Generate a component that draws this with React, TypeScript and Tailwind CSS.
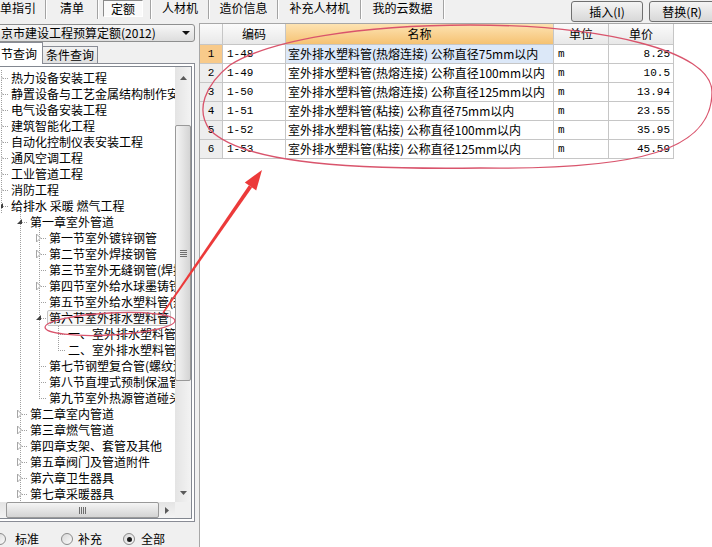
import React from "react";

const cjk = "font-['Noto_Sans_CJK_SC','Liberation_Sans',sans-serif]";
const mono = "font-['Liberation_Mono','Noto_Sans_CJK_SC',monospace]";

type TreeNode = { lv: number; ex?: "open" | "closed"; t: string; sel?: boolean };

const treeRows: TreeNode[] = [
  { lv: 0, ex: "closed", t: "热力设备安装工程" },
  { lv: 0, ex: "closed", t: "静置设备与工艺金属结构制作安装工程" },
  { lv: 0, ex: "closed", t: "电气设备安装工程" },
  { lv: 0, ex: "closed", t: "建筑智能化工程" },
  { lv: 0, ex: "closed", t: "自动化控制仪表安装工程" },
  { lv: 0, ex: "closed", t: "通风空调工程" },
  { lv: 0, ex: "closed", t: "工业管道工程" },
  { lv: 0, ex: "closed", t: "消防工程" },
  { lv: 0, ex: "open", t: "给排水 采暖 燃气工程" },
  { lv: 1, ex: "open", t: "第一章室外管道" },
  { lv: 2, ex: "closed", t: "第一节室外镀锌钢管" },
  { lv: 2, ex: "closed", t: "第二节室外焊接钢管" },
  { lv: 2, t: "第三节室外无缝钢管(焊接)" },
  { lv: 2, ex: "closed", t: "第四节室外给水球墨铸铁管" },
  { lv: 2, t: "第五节室外给水塑料管(热熔连接)" },
  { lv: 2, ex: "open", t: "第六节室外排水塑料管", sel: true },
  { lv: 3, t: "一、室外排水塑料管(热熔连接)" },
  { lv: 3, t: "二、室外排水塑料管(粘接)" },
  { lv: 2, t: "第七节钢塑复合管(螺纹连接)" },
  { lv: 2, t: "第八节直埋式预制保温管" },
  { lv: 2, t: "第九节室外热源管道碰头" },
  { lv: 1, ex: "closed", t: "第二章室内管道" },
  { lv: 1, ex: "closed", t: "第三章燃气管道" },
  { lv: 1, ex: "closed", t: "第四章支架、套管及其他" },
  { lv: 1, ex: "closed", t: "第五章阀门及管道附件" },
  { lv: 1, ex: "closed", t: "第六章卫生器具" },
  { lv: 1, ex: "closed", t: "第七章采暖器具" },
];

const pads = ["pl-[10px]", "pl-[29px]", "pl-[48px]", "pl-[67px]"];

const quotas = [
  { code: "1-48", name: "室外排水塑料管(热熔连接) 公称直径75mm以内", unit: "m", price: "8.25" },
  { code: "1-49", name: "室外排水塑料管(热熔连接) 公称直径100mm以内", unit: "m", price: "10.5" },
  { code: "1-50", name: "室外排水塑料管(热熔连接) 公称直径125mm以内", unit: "m", price: "13.94" },
  { code: "1-51", name: "室外排水塑料管(粘接) 公称直径75mm以内", unit: "m", price: "23.55" },
  { code: "1-52", name: "室外排水塑料管(粘接) 公称直径100mm以内", unit: "m", price: "35.95" },
  { code: "1-53", name: "室外排水塑料管(粘接) 公称直径125mm以内", unit: "m", price: "45.59" },
];

function Sep() {
  return <div className="h-[19px] w-[2px] border-l border-[#a3a3a3] bg-white" />;
}

function TopBar() {
  return (
    <div className="flex h-[23px] items-start">
      <div className="flex h-[16px] w-[45px] items-center">单指引</div>
      <Sep />
      <div className="flex h-[16px] w-[50px] items-center justify-center">清单</div>
      <Sep />
      <div className="h-[17px] w-[51px] pl-[4px]">
        <div className="flex h-[17px] w-[40px] items-center justify-center border border-[#8a8a8a] border-b-white border-r-white bg-[#fafafa]">
          定额
        </div>
      </div>
      <Sep />
      <div className="flex h-[16px] w-[56px] items-center justify-center">人材机</div>
      <Sep />
      <div className="flex h-[16px] w-[67px] items-center justify-center">造价信息</div>
      <Sep />
      <div className="flex h-[16px] w-[81px] items-center justify-center">补充人材机</div>
      <Sep />
      <div className="flex h-[16px] w-[81px] items-center justify-center">我的云数据</div>
      <Sep />
      <div className="ml-auto -mr-[3px] mt-[1px] flex gap-[6px]">
        <button className="h-[21px] w-[72px] rounded-[3px] border border-[#707070] bg-gradient-to-b from-[#f4f4f4] to-[#d8d8d8] text-[12px]">
          插入(I)
        </button>
        <button className="h-[21px] w-[66px] rounded-[3px] border border-[#707070] bg-gradient-to-b from-[#f4f4f4] to-[#d8d8d8] text-[12px]">
          替换(R)
        </button>
      </div>
    </div>
  );
}

function TreeLines() {
  const cx = (lv: number) => lv * 19;
  return (
    <svg className="pointer-events-none absolute left-0 top-[3px]" width="180" height="432">
      <g stroke="#a0a0a0" strokeWidth="1" strokeDasharray="1 1" shapeRendering="crispEdges">
        <line x1="0.5" y1="0" x2="0.5" y2="144" />
        <line x1="19.5" y1="136" x2="19.5" y2="432" />
        <line x1="38.5" y1="152" x2="38.5" y2="328" />
        <line x1="57.5" y1="248" x2="57.5" y2="280" />
        {treeRows.map((r, i) => (
          <line key={i} x1={cx(r.lv)} y1={i * 16 + 8.5} x2={cx(r.lv) + 8} y2={i * 16 + 8.5} />
        ))}
      </g>
      {treeRows.map((r, i) => {
        const x = cx(r.lv);
        const y = i * 16 + 8;
        if (r.ex === "closed")
          return (
            <polygon
              key={i}
              points={`${x - 2.5},${y - 4} ${x + 1.5},${y} ${x - 2.5},${y + 4}`}
              fill="#ffffff"
              stroke="#a6a6a6"
            />
          );
        if (r.ex === "open")
          return <polygon key={i} points={`${x + 2},${y - 3} ${x + 2},${y + 2} ${x - 3},${y + 2}`} fill="#404040" />;
        return null;
      })}
    </svg>
  );
}

function Tree() {
  return (
    <div className="h-[435px] w-[177px] overflow-hidden bg-white">
      <div className="relative ml-[2px] pt-[3px]">
        <TreeLines />
        {treeRows.map((r, i) => (
          <div key={i} className={`relative h-[16px] whitespace-nowrap leading-[16px] ${pads[r.lv]}`}>
            {r.sel ? (
              <span className="-ml-[2px] inline-block h-[16px] rounded-[2px] border border-[#c4c4c4] bg-[#f7f7f7] px-[1px] leading-[14px]">
                {r.t}
              </span>
            ) : (
              r.t
            )}
          </div>
        ))}
      </div>
    </div>
  );
}

function VScroll() {
  return (
    <div className="flex h-[435px] w-[16px] flex-col bg-gradient-to-r from-[#e4e4e4] to-[#f3f3f3]">
      <div className="flex h-[17px] items-end justify-center pb-[4px]">
        <svg width="7" height="4">
          <polygon points="3.5,0 7,4 0,4" fill="#5a5a5a" />
        </svg>
      </div>
      <div className="h-[41px]" />
      <div className="flex h-[256px] items-center justify-center rounded-[2px] border border-[#999] bg-gradient-to-r from-[#f5f5f5] to-[#d4d4d4]">
        <div className="flex w-[7px] flex-col gap-[1px]">
          <div className="h-px bg-[#6e6e6e]" />
          <div className="h-px bg-[#6e6e6e]" />
          <div className="h-px bg-[#6e6e6e]" />
          <div className="h-px bg-[#6e6e6e]" />
        </div>
      </div>
      <div className="flex-1" />
      <div className="flex h-[17px] items-start justify-center pt-[6px]">
        <svg width="7" height="4">
          <polygon points="0,0 7,0 3.5,4" fill="#5a5a5a" />
        </svg>
      </div>
    </div>
  );
}

function HScroll() {
  return (
    <div className="flex h-[16px]">
      <div className="flex w-[177px] items-stretch bg-gradient-to-b from-[#e4e4e4] to-[#f3f3f3]">
        <div className="ml-[7px] flex w-[153px] items-center justify-center rounded-[2px] border border-[#999] bg-gradient-to-b from-[#f5f5f5] to-[#d4d4d4]">
          <div className="flex h-[7px] gap-[1px]">
            <div className="w-px bg-[#6e6e6e]" />
            <div className="w-px bg-[#6e6e6e]" />
            <div className="w-px bg-[#6e6e6e]" />
            <div className="w-px bg-[#6e6e6e]" />
          </div>
        </div>
        <div className="flex flex-1 items-center justify-center">
          <svg width="4" height="7">
            <polygon points="0,0 4,3.5 0,7" fill="#5a5a5a" />
          </svg>
        </div>
      </div>
      <div className="w-[16px] bg-[#f0f0f0]" />
    </div>
  );
}

function Radio({ checked }: { checked?: boolean }) {
  return (
    <span className="flex h-[12px] w-[12px] items-center justify-center rounded-full border border-[#8a8a8a] bg-gradient-to-br from-[#d8d8d8] to-[#fbfbfb]">
      {checked && <span className="h-[5px] w-[5px] rounded-full bg-[#1a1a1a]" />}
    </span>
  );
}

function LeftPanel() {
  return (
    <div className="flex w-[195px] flex-col">
      <div className="-ml-[5px] mt-[1px] flex h-[19px] w-[200px] items-center justify-between rounded-[3px] border border-[#8e8f8f] bg-gradient-to-b from-[#f7f7f7] to-[#dddddd] pl-[5px] pr-[4px]">
        <span className="whitespace-nowrap">京市建设工程预算定额(2012)</span>
        <svg width="8" height="4">
          <polygon points="0,0 8,0 4,4" fill="#111" />
        </svg>
      </div>
      <div className="flex h-[22px] items-end">
        <div className="relative -mb-px -ml-[5px] flex h-[22px] w-[48px] items-center border border-b-0 border-[#898c95] bg-white pl-[5px]">
          节查询
        </div>
        <div className="flex h-[17px] w-[55px] items-center justify-center border border-b-0 border-l-0 border-[#898c95] bg-gradient-to-b from-[#f2f2f2] to-[#e1e1e1]">
          条件查询
        </div>
      </div>
      <div className="-ml-[5px] h-[459px] w-[200px] border border-[#898c95] bg-white p-[2px]">
        <div className="flex h-[453px] flex-col border border-[#828790]">
          <div className="flex">
            <Tree />
            <VScroll />
          </div>
          <HScroll />
        </div>
      </div>
      <div className="-ml-[6px] mt-[9px] flex h-[16px] items-center">
        <Radio />
        <span className="ml-[9px]">标准</span>
        <span className="ml-[22px]">
          <Radio />
        </span>
        <span className="ml-[5px]">补充</span>
        <span className="ml-[21px]">
          <Radio checked />
        </span>
        <span className="ml-[6px]">全部</span>
      </div>
    </div>
  );
}

function RightPanel() {
  const cell = "border-b border-r border-[#c6c6c6]";
  return (
    <div className="flex-1 border-l border-t border-[#a7a7a7] bg-white">
      <div className="flex h-[21px]">
        <div className={`w-[23px] bg-gradient-to-b from-[#fbfbfb] to-[#e8e8e8] ${cell}`} />
        <div className={`flex w-[63px] items-center justify-center bg-gradient-to-b from-[#fbfbfb] to-[#e8e8e8] ${cell}`}>编码</div>
        <div className={`flex w-[268px] items-center justify-center bg-gradient-to-b from-[#fde3b2] to-[#f5c272] ${cell}`}>名称</div>
        <div className={`flex w-[55px] items-center justify-center bg-gradient-to-b from-[#fbfbfb] to-[#e8e8e8] ${cell}`}>单位</div>
        <div className={`flex w-[65px] items-center justify-center bg-gradient-to-b from-[#fbfbfb] to-[#e8e8e8] ${cell}`}>单价</div>
      </div>
      {quotas.map((q, i) => (
        <div key={q.code} className="flex h-[19px]">
          <div
            className={`flex w-[23px] items-center justify-center text-[11px] ${mono} ${cell} ${
              i === 0 ? "bg-[#f8ca8a]" : "bg-[#eeeeee]"
            }`}
          >
            {i + 1}
          </div>
          <div className={`flex w-[63px] items-center pl-[4px] text-[11px] ${mono} ${cell}`}>{q.code}</div>
          <div className={`flex w-[268px] items-center whitespace-nowrap pl-[2px] ${cell} ${i === 0 ? "bg-[#dce8f8]" : ""}`}>
            {q.name}
          </div>
          <div className={`flex w-[55px] items-center pl-[4px] text-[11px] ${mono} ${cell}`}>{q.unit}</div>
          <div className={`flex w-[65px] items-center justify-end pr-[3px] text-[11px] ${mono} ${cell}`}>{q.price}</div>
        </div>
      ))}
    </div>
  );
}

function Annotations() {
  return (
    <svg className="pointer-events-none absolute left-0 top-0" width="712" height="547">
      <path
        d="M 470 25 C 600 25, 712 50, 712 92 C 712 150, 640 170, 480 168 C 330 170, 240 160, 210 130 C 195 110, 205 85, 230 65 C 270 40, 360 25, 470 25 Z"
        fill="none"
        stroke="#d9546c"
        strokeWidth="1.3"
      />
      <ellipse
        cx="110"
        cy="324"
        rx="65"
        ry="11"
        transform="rotate(-3 110 324)"
        fill="none"
        stroke="#d9546c"
        strokeWidth="1.3"
      />
      <polygon points="162.4,312.6 163.6,313.4 252.1,187.5 248.9,185.2" fill="#ec3a3a" />
      <polygon points="262,170 244.8,182.4 256.2,190.4" fill="#ec3a3a" />
    </svg>
  );
}

export default function App() {
  return (
    <div className={`relative h-[547px] w-[712px] overflow-hidden bg-[#f0f0f0] text-[12px] leading-[16px] text-black ${cjk}`}>
      <TopBar />
      <div className="flex h-[524px]">
        <LeftPanel />
        <div className="w-[4px]" />
        <RightPanel />
      </div>
      <Annotations />
    </div>
  );
}
